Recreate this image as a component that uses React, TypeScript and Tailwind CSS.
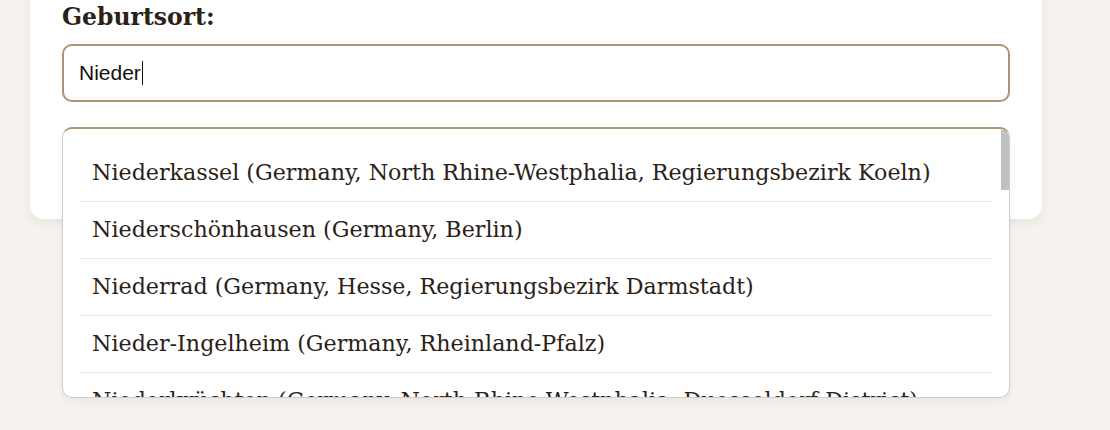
const PLACES = [
  'Niederkassel (Germany, North Rhine-Westphalia, Regierungsbezirk Koeln)',
  'Niederschönhausen (Germany, Berlin)',
  'Niederrad (Germany, Hesse, Regierungsbezirk Darmstadt)',
  'Nieder-Ingelheim (Germany, Rheinland-Pfalz)',
  'Niederkrüchten (Germany, North Rhine-Westphalia, Duesseldorf District)',
];

export default function App() {
  return (
    <div className="h-[430px] w-[1110px] overflow-hidden bg-[#f6f3ee]">
      <div className="relative -mt-4 ml-[30px] w-[1012px] rounded-[14px] bg-white px-8 pb-[117px] pt-[20px] shadow-[0_4px_12px_rgba(60,40,20,0.08)]">
        <label className="block font-['DejaVu_Serif',serif] text-[23.5px] font-bold leading-[26px] text-[#2b2117]">
          Geburtsort:
        </label>
        <div className="mt-[14px] flex h-[58px] items-center rounded-[10px] border-2 border-[#ab9474] bg-white px-[15px] font-['Liberation_Sans',Arial,sans-serif] text-[21px] text-[#111]">
          <span>Nieder</span>
          <span className="ml-px inline-block h-[24px] w-px bg-[#111]" />
        </div>

        <div className="absolute left-8 right-8 top-[143px] flex h-[271px] overflow-hidden rounded-[10px] border border-[#cdcdcd] border-t-2 border-t-[#ab9474] bg-white shadow-[0_4px_10px_rgba(0,0,0,0.05)]">
          <ul className="flex-1 pl-[17px] pr-[9px] pt-[16px] font-['DejaVu_Serif',serif] text-[22.2px] text-[#2b2117]">
            {PLACES.map((place) => (
              <li
                key={place}
                className="flex h-[57px] items-center whitespace-nowrap border-b border-[#e9e9e9] px-3"
              >
                {place}
              </li>
            ))}
          </ul>
          <div className="w-2 shrink-0">
            <div className="mt-[1px] h-[60px] w-2 bg-[#c1c1c1]" />
          </div>
        </div>
      </div>
    </div>
  );
}
